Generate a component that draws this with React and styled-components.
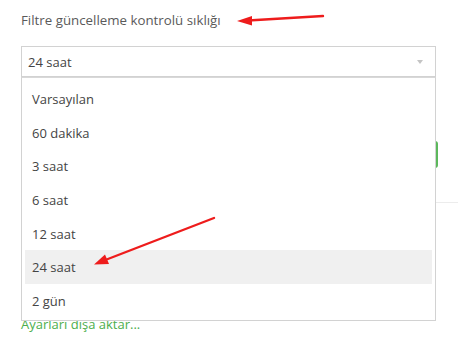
import React from "react";
import styled, { createGlobalStyle } from "styled-components";

const GlobalStyle = createGlobalStyle`
  body {
    margin: 0;
    background: #ffffff;
    font-family: "Open Sans", "Noto Sans", sans-serif;
    font-size: 13px;
    color: #555555;
  }
`;

const Page = styled.div`
  position: relative;
  width: 458px;
  height: 341px;
  overflow: hidden;
  padding: 10px 22px 0 21px;
  box-sizing: border-box;
`;

const Label = styled.div`
  height: 20px;
  line-height: 20px;
  font-size: 13.3px;
  color: #5a5a5a;
  margin-bottom: 16px;
`;

const SelectWrap = styled.div`
  position: relative;
  z-index: 2;
`;

const SelectBox = styled.div`
  height: 31px;
  border: 1px solid #d2d2d2;
  box-sizing: border-box;
  display: flex;
  align-items: center;
  justify-content: space-between;
  padding: 0 12px 0 6px;
  color: #444444;
`;

const Caret = styled.span`
  width: 0;
  height: 0;
  border-left: 3.5px solid transparent;
  border-right: 3.5px solid transparent;
  border-top: 4px solid #c4c4c4;
`;

const Menu = styled.ul`
  position: absolute;
  top: 100%;
  left: 0;
  right: 0;
  margin: 0;
  padding: 4px 3px 2px 3px;
  list-style: none;
  background: #ffffff;
  border: 1px solid #d2d2d2;
  border-top: 1px solid #d8d8d8;
`;

const Item = styled.li`
  height: 33.7px;
  display: flex;
  align-items: center;
  padding-left: 7px;
  color: #444444;
  background: ${(p) => (p.$active ? "#f0f0f0" : "transparent")};
`;

const Behind = styled.div`
  position: relative;
  z-index: 1;
  display: flex;
  flex-direction: column;
`;

const ButtonRow = styled.div`
  display: flex;
  justify-content: flex-end;
  margin-top: 64px;
`;

const GreenButton = styled.div`
  width: 90px;
  height: 27px;
  margin-right: -2px;
  border-radius: 3px;
  background: #5cb85c;
`;

const Divider = styled.div`
  height: 1px;
  background: #ececec;
  margin: 34px -22px 0 0;
`;

const Link = styled.div`
  margin-top: 112px;
  color: #4cae4c;
  line-height: 18px;
`;

const Arrows = styled.svg`
  position: absolute;
  left: 0;
  top: 0;
  z-index: 5;
  pointer-events: none;
`;

const options = ["Varsayılan", "60 dakika", "3 saat", "6 saat", "12 saat", "24 saat", "2 gün"];

export default function App() {
  return (
    <Page>
      <GlobalStyle />
      <Label>Filtre güncelleme kontrolü sıklığı</Label>
      <SelectWrap>
        <SelectBox>
          <span>24 saat</span>
          <Caret />
        </SelectBox>
        <Menu>
          {options.map((o) => (
            <Item key={o} $active={o === "24 saat"}>
              {o}
            </Item>
          ))}
        </Menu>
      </SelectWrap>
      <Behind>
        <ButtonRow>
          <GreenButton />
        </ButtonRow>
        <Divider />
        <Link>Ayarları dışa aktar...</Link>
      </Behind>
      <Arrows width="458" height="341" viewBox="0 0 458 341">
        <line x1="323" y1="16" x2="248" y2="20.5" stroke="#ee1c1c" strokeWidth="2.4" strokeLinecap="round" />
        <polygon points="237,21 252,16 252,25.5" fill="#ee1c1c" />
        <line x1="214" y1="218" x2="104" y2="260.5" stroke="#ee1c1c" strokeWidth="2.4" strokeLinecap="round" />
        <polygon points="94,264.5 105,254.5 109,264" fill="#ee1c1c" />
      </Arrows>
    </Page>
  );
}
